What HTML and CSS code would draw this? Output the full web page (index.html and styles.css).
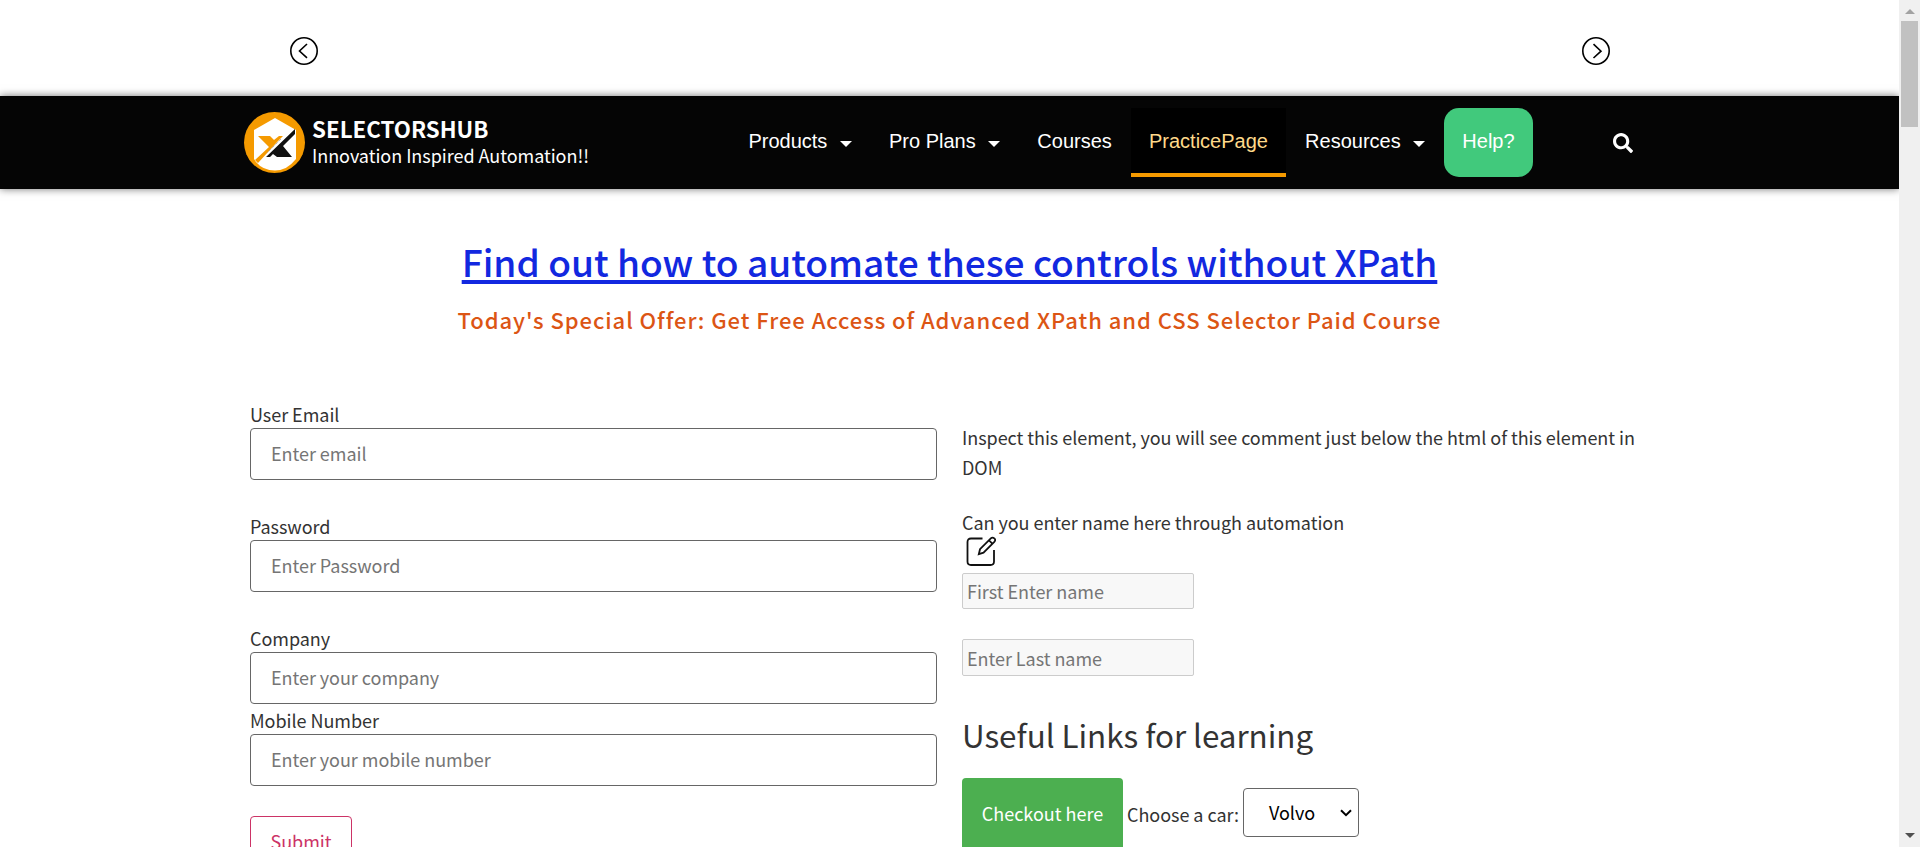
FILE: index.html
```
<!DOCTYPE html>
<html lang="en">
<head>
<meta charset="utf-8">
<title>SelectorsHub Practice Page</title>
<link rel="stylesheet" href="styles.css">
</head>
<body>
<div class="window">
<div class="page">
  <div class="carousel">
    <svg class="arrow" viewBox="0 0 28 28"><circle cx="14" cy="14" r="13.2"/><path d="M17 7L9.500 14l7.500 6.800"/></svg>
    <svg class="arrow" viewBox="0 0 28 28"><circle cx="14" cy="14" r="13.2"/><path d="M11.500 7.200L19 14.200l-7.500 6.800"/></svg>
  </div>
  <header class="header">
    <a class="brand">
      <svg class="logo" viewBox="0 0 61 61">
        <circle cx="30.5" cy="30.5" r="30.5" fill="#f59a00"/>
        <path d="M31 6L52 18V47Q43 58.500 31 58.500T12 50L10 47V18z" fill="#fff"/>
        <path d="M14 24h12l4 4 5-4h4l-5 5L14 51l-3-3 14-13z" fill="#f59a00"/>
        <path d="M37 27L23 41" stroke="#999" stroke-width="1" stroke-dasharray="1 1"/>
        <path d="M51 17v5L39 34l9 11H33l-4-3-3 3h-4z" fill="#111"/>
      </svg>
      <span class="brand-text"><strong class="brand-name">SELECTORSHUB</strong><span class="tagline">Innovation Inspired Automation!!</span></span>
    </a>
    <nav class="nav">
      <a class="item">Products<i class="caret"></i></a>
      <a class="item">Pro Plans<i class="caret"></i></a>
      <a class="item">Courses</a>
      <a class="item active">PracticePage</a>
      <a class="item">Resources<i class="caret"></i></a>
      <a class="item help">Help?</a>
    </nav>
    <svg class="search" viewBox="0 0 512 512"><path fill="#fff" d="M505 442.700L405.300 343c-4.500-4.500-10.600-7-17-7H372c27.600-35.300 44-79.700 44-128C416 93.100 322.900 0 208 0S0 93.100 0 208s93.100 208 208 208c48.300 0 92.700-16.400 128-44v16.300c0 6.400 2.500 12.500 7 17l99.700 99.700c9.400 9.400 24.600 9.400 33.900 0l28.300-28.300c9.400-9.400 9.400-24.600.1-34zM208 336c-70.700 0-128-57.200-128-128 0-70.700 57.200-128 128-128 70.700 0 128 57.200 128 128 0 70.700-57.200 128-128 128z"/></svg>
  </header>
  <section class="intro">
    <h1 class="title"><a class="title-link">Find out how to automate these controls without XPath</a></h1>
    <p class="offer">Today's Special Offer: Get Free Access of Advanced XPath and CSS Selector Paid Course</p>
  </section>
  <main class="columns">
    <form class="form">
      <label class="field">User Email<input class="input" placeholder="Enter email"></label>
      <label class="field">Password<input class="input" placeholder="Enter Password"></label>
      <label class="field tight">Company<input class="input" placeholder="Enter your company"></label>
      <label class="field last">Mobile Number<input class="input" placeholder="Enter your mobile number"></label>
      <button class="submit" type="button">Submit</button>
    </form>
    <div class="side">
      <p class="note">Inspect this element, you will see comment just below the html of this element in DOM</p>
      <p class="note question">Can you enter name here through automation</p>
      <svg class="edit" viewBox="0 0 30 30"><path d="M16.500 2.500H5Q1.500 2.500 1.500 6V25.500Q1.500 29 5 29H24.500Q28 29 28 25.500V14"/><path d="M12.800 18.200l1.200-5L24.800 2.400Q26.500.8 28.300 2.400T28.300 5.900L17.500 16.700zM23 4.300l3.400 3.400"/></svg>
      <input class="name" placeholder="First Enter name" disabled>
      <input class="name second" placeholder="Enter Last name" disabled>
      <h2 class="heading">Useful Links for learning</h2>
      <div class="links">
        <button class="checkout" type="button">Checkout here</button>
        <span class="choose">Choose a car:</span>
        <div class="select"><span class="value">Volvo</span><svg class="chevron" viewBox="0 0 12 8"><path d="M1 1.200l5 5 5-5"/></svg></div>
      </div>
    </div>
  </main>
</div>
<div class="scrollbar"><i class="up"></i><div class="thumb"></div><i class="down"></i></div>
</div>
</body>
</html>
```
FILE: styles.css
```
* { box-sizing: border-box; }
body { margin: 0; overflow: hidden; background: #fff; color: #333; font-family: "Noto Sans CJK JP", "Noto Sans", sans-serif; }
.window { display: flex; height: 847px; overflow: hidden; }
.page { width: 1899px; height: 847px; overflow: hidden; }
.carousel { height: 96px; padding: 37px 289px 0 290px; display: flex; justify-content: space-between; }
.arrow { width: 28px; height: 28px; fill: none; stroke: #000; stroke-width: 1.6; }
.header { height: 93px; background: #050505; box-shadow: 0 0 8px rgba(0,0,0,.55); display: flex; align-items: flex-start; padding: 12px 0 0 244px; }
.brand { display: flex; width: 486px; color: #fff; }
.logo { width: 61px; height: 61px; margin-top: 4px; }
.brand-text { display: flex; flex-direction: column; margin-left: 7px; padding-top: 6px; }
.brand-name { font-size: 22.300px; line-height: 29px; font-weight: 700; white-space: nowrap; }
.tagline { font-size: 18px; line-height: 25px; letter-spacing: -.04px; white-space: nowrap; }
.nav { display: flex; width: 803px; justify-content: space-between; font: 20px/69px "Liberation Sans", Arial, sans-serif; color: #fff; }
.item { display: flex; align-items: center; height: 69px; padding: 0 18.400px 2px; white-space: nowrap; line-height: 65px; }
.caret { border: 6px solid transparent; border-top-color: #fff; border-bottom: 0; margin-left: 12.500px; margin-top: 4px; }
.active { background: #000; color: #ffd98a; box-shadow: inset 0 -4px #f59a00; }
.help { background: #41c97c; border-radius: 15px; }
.search { width: 20px; height: 20px; margin: 25px 0 0 80px; }
.intro { height: 214px; padding-top: 42px; text-align: center; }
.title { margin: 0; font-size: 37.100px; line-height: 60px; font-weight: 500; color: #1228e0; }
.title-link { text-decoration: underline; text-decoration-thickness: 4px; text-underline-offset: 3px; }
.offer { margin: 8px 0 0; font-size: 22px; line-height: 40px; font-weight: 500; letter-spacing: .95px; color: #dc5514; }
.columns { display: grid; grid-template-columns: 687px 680px; gap: 25px; padding-left: 250px; font-size: 18px; letter-spacing: -.04px; }
.field { display: block; line-height: 23px; padding-top: 0; margin-bottom: 35px; }
.tight { margin-bottom: 5px; }
.last { margin-bottom: 30px; }
.input { display: block; width: 687px; height: 52px; margin-top: 2px; padding: 0 20px 2px; border: 1px solid #666; border-radius: 4px; font: inherit; font-size: 18px; letter-spacing: inherit; }
.input::placeholder, .name::placeholder { color: #757575; opacity: 1; }
.submit { display: block; width: 102px; height: 52px; border: 1px solid #c36; border-radius: 4px; background: #fff; color: #c36; font: 18px "Noto Sans CJK JP", sans-serif; padding: 0 0 2px; }
.side { padding-top: 19px; }
.note { margin: 0; line-height: 30px; }
.question { margin-top: 25px; }
.edit { display: block; width: 30px; height: 30px; margin: -1px 0 0 4px; fill: none; stroke: #111; stroke-width: 1.800; }
.name { display: block; width: 232px; height: 36px; margin-top: 7px; padding: 0 4px; border: 1px solid #ccc; border-radius: 2px; background: #f8f8f8; font: inherit; font-size: 18px; letter-spacing: inherit; }
.second { margin-top: 30px; height: 37px; }
.heading { margin: 36px 0 0; font-size: 31.400px; line-height: 46px; font-weight: 400; }
.links { display: flex; margin-top: 20px; }
.checkout { width: 161px; height: 72px; border: 0; border-radius: 4px; background: #4caf50; color: #fff; font: 400 18px "Noto Sans CJK JP", sans-serif; padding: 0 0 2px; }
.choose { margin: 22px 4px 0; line-height: 28px; white-space: nowrap; width: 112px; }
.select { display: flex; justify-content: space-between; align-items: center; width: 116px; height: 49px; margin-top: 10px; padding: 0 6px 0 25px; border: 1px solid #666; border-radius: 4px; color: #000; }
.value { padding-bottom: 1px; }
.chevron { width: 12px; height: 8px; fill: none; stroke: #000; stroke-width: 2; }
.scrollbar { width: 21px; height: 847px; background: #f0f0f0; display: flex; flex-direction: column; align-items: center; }
.thumb { width: 17px; height: 106px; background: #c1c1c1; margin-top: 7px; }
.up { margin-top: 9px; border: 5px solid transparent; border-top: 0; border-bottom-color: #a3a3a3; }
.down { margin: auto 0 9px; border: 5px solid transparent; border-bottom: 0; border-top-color: #505050; }
```
